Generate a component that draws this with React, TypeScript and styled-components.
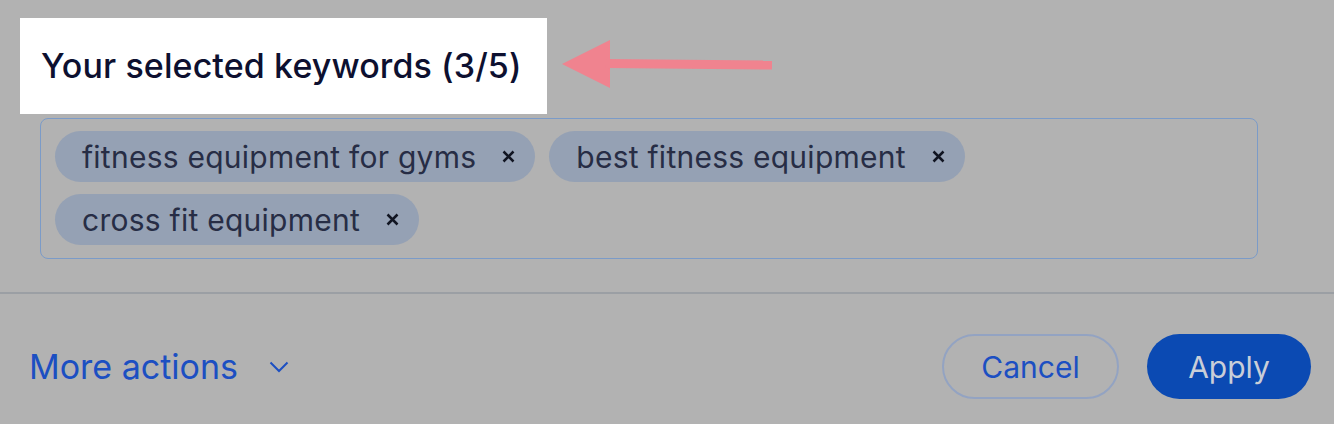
import styled, { createGlobalStyle } from "styled-components";

const GlobalStyle = createGlobalStyle`
  html, body {
    margin: 0;
    padding: 0;
    background: #b2b2b2;
    font-family: "Inter", "Open Sans", sans-serif;
  }
`;

const Page = styled.div`
  width: 1334px;
  height: 424px;
  overflow: hidden;
  display: flex;
  flex-direction: column;
  background: #b2b2b2;
`;

const HeadingRow = styled.div`
  display: flex;
  align-items: center;
  padding: 18px 0 0 20px;
`;

const HeadingBox = styled.div`
  background: #ffffff;
  height: 96px;
  display: flex;
  align-items: center;
  padding: 0 25px 0 21px;
  box-sizing: border-box;
`;

const HeadingText = styled.span`
  font-size: 34px;
  font-weight: 500;
  color: #0d1030;
  letter-spacing: 0.1px;
  margin-top: -1px;
`;

const Arrow = styled.svg`
  margin-left: 15px;
  margin-top: -2px;
`;

const KeywordBox = styled.div`
  margin: 4px 0 0 40px;
  width: 1218px;
  height: 141px;
  box-sizing: border-box;
  border: 1.5px solid #7b9bc8;
  border-radius: 8px;
  padding: 12px 14px;
  display: flex;
  flex-wrap: wrap;
  align-content: flex-start;
  gap: 12px 14px;
`;

const Chip = styled.div`
  height: 51px;
  border-radius: 26px;
  background: #95a1b4;
  display: flex;
  align-items: center;
  padding: 0 20px 0 27px;
  box-sizing: border-box;
`;

const ChipLabel = styled.span`
  font-size: 30px;
  color: #272d45;
  letter-spacing: 0.25px;
`;

const ChipRemove = styled.span`
  margin-left: 26px;
  display: flex;
  align-items: center;
`;

const Divider = styled.div`
  margin-top: 33px;
  height: 2px;
  background: #9b9fa4;
`;

const Footer = styled.div`
  display: flex;
  align-items: center;
  justify-content: space-between;
  padding: 40px 23px 0 29px;
`;

const MoreActions = styled.div`
  display: flex;
  align-items: center;
  gap: 31px;
  color: #1c4fc2;
  font-size: 34px;
`;

const Buttons = styled.div`
  display: flex;
  gap: 28px;
`;

const Button = styled.div<{ $primary?: boolean }>`
  height: 65px;
  border-radius: 33px;
  box-sizing: border-box;
  display: flex;
  align-items: center;
  justify-content: center;
  font-size: 30px;
  width: ${(p) => (p.$primary ? "164px" : "177px")};
  background: ${(p) => (p.$primary ? "#0b4ab3" : "transparent")};
  color: ${(p) => (p.$primary ? "#c9ced8" : "#1c4fc2")};
  border: ${(p) => (p.$primary ? "none" : "2px solid #93a3c2")};
`;

const keywords = [
  "fitness equipment for gyms",
  "best fitness equipment",
  "cross fit equipment",
];

function Cross() {
  return (
    <svg width="13" height="13" viewBox="0 0 13 13">
      <path d="M1.5 1.5 L11.5 11.5 M11.5 1.5 L1.5 11.5" stroke="#111522" strokeWidth="2.5" />
    </svg>
  );
}

export default function App() {
  return (
    <Page>
      <GlobalStyle />
      <HeadingRow>
        <HeadingBox>
          <HeadingText>Your selected keywords (3/5)</HeadingText>
        </HeadingBox>
        <Arrow width="212" height="50" viewBox="0 0 212 50">
          <polygon points="0,24 48,0 48,48" fill="#f0838f" />
          <path d="M44 23.5 L210 25" stroke="#f0838f" strokeWidth="9" />
        </Arrow>
      </HeadingRow>
      <KeywordBox>
        {keywords.map((k) => (
          <Chip key={k}>
            <ChipLabel>{k}</ChipLabel>
            <ChipRemove>
              <Cross />
            </ChipRemove>
          </Chip>
        ))}
      </KeywordBox>
      <Divider />
      <Footer>
        <MoreActions>
          More actions
          <svg width="20" height="12" viewBox="0 0 20 12">
            <path d="M1.5 1.5 L10 10 L18.5 1.5" stroke="#1c4fc2" strokeWidth="2" fill="none" />
          </svg>
        </MoreActions>
        <Buttons>
          <Button>Cancel</Button>
          <Button $primary>Apply</Button>
        </Buttons>
      </Footer>
    </Page>
  );
}
